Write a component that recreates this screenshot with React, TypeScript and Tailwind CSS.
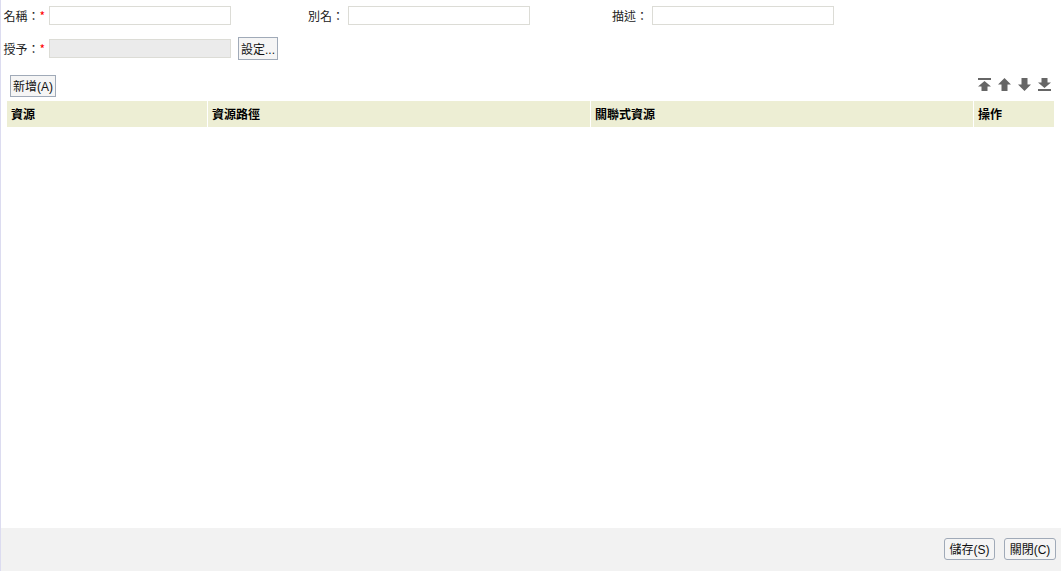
import React from "react";

const cjk = { fontFamily: '"Noto Sans CJK TC", "Liberation Sans", sans-serif' };
const mixed = { fontFamily: '"Liberation Sans", "Noto Sans CJK TC", sans-serif' };

function Field({ label, req, labelW, gapAfter, disabled }: { label: string; req?: boolean; labelW: string; gapAfter?: string; disabled?: boolean }) {
  return (
    <div className={`flex items-center ${gapAfter ?? ""}`}>
      <div className={`${labelW} flex items-center justify-end pr-[4px] text-[12px] leading-[19px] text-[#222]`}>
        <span>{label}</span>
        {req ? <span className="text-[12px] text-[#f00]">*</span> : null}
      </div>
      <div className={`w-[182px] h-[19px] border border-[#dcdcd6] ${disabled ? "bg-[#ebebeb]" : "bg-white"}`} />
    </div>
  );
}

function ArrowIcon({ kind }: { kind: "first" | "up" | "down" | "last" }) {
  const paths: Record<string, string> = {
    first: "M0 0H13V2H0ZM6.5 3L13 8.5H9.5V13H3.5V8.5H0Z",
    up: "M6.5 0L13 6.5H9.5V13H3.5V6.5H0Z",
    down: "M3.5 0H9.5V6.5H13L6.5 13L0 6.5H3.5Z",
    last: "M3.5 0H9.5V4.5H13L6.5 10L0 4.5H3.5ZM0 11H13V13H0Z",
  };
  return (
    <svg width="13" height="13" viewBox="0 0 13 13" className="block">
      <path d={paths[kind]} fill="#666666" />
    </svg>
  );
}

export default function App() {
  return (
    <div style={cjk} className="w-[1061px] h-[571px] flex flex-col bg-white border-l border-[#dcdcf0] overflow-hidden text-[12px] text-[#222]">
      <div className="flex-1 flex flex-col">
        <div className="flex items-center pt-[6px] h-[25px]">
          <Field label="名稱：" req labelW="w-[48px]" gapAfter="mr-[65px]" />
          <Field label="別名：" labelW="w-[52px]" gapAfter="mr-[70px]" />
          <Field label="描述：" labelW="w-[52px]" />
        </div>
        <div className="flex items-center mt-[12px] h-[23px]">
          <Field label="授予：" req labelW="w-[48px]" disabled />
          <button style={mixed} className="ml-[7px] w-[40px] h-[23px] pt-[2px] border border-[#a0aab8] bg-[#f5f5f5] text-[12px] text-[#111] leading-none">設定...</button>
        </div>
        <div className="flex items-center justify-between mt-[15px] h-[22px] pl-[9px] pr-[10px]">
          <button style={mixed} className="w-[46px] h-[22px] pt-[2px] border border-[#a0aab8] bg-[#f5f5f5] text-[12px] text-[#111] leading-none">新增(A)</button>
          <div className="flex items-center gap-[7px] mb-[3px]">
            <ArrowIcon kind="first" />
            <ArrowIcon kind="up" />
            <ArrowIcon kind="down" />
            <ArrowIcon kind="last" />
          </div>
        </div>
        <div className="flex ml-[6px] mt-[4px] w-[1047px] h-[26px] bg-[#edeed4] text-[12px] font-bold text-black">
          <div className="w-[201px] pl-[4px] flex items-center border-r border-white">資源</div>
          <div className="w-[383px] pl-[4px] flex items-center border-r border-white">資源路徑</div>
          <div className="w-[383px] pl-[4px] flex items-center border-r border-white">關聯式資源</div>
          <div className="flex-1 pl-[4px] flex items-center">操作</div>
        </div>
      </div>
      <div className="h-[43px] bg-[#f2f2f2] flex items-center justify-end gap-[9px] pr-[5px] pb-[2px]">
        <button style={mixed} className="w-[51px] h-[22px] pt-[2px] rounded-[3px] border border-[#a0aab8] bg-[#f5f5f5] text-[12px] text-[#111] leading-none">儲存(S)</button>
        <button style={mixed} className="w-[52px] h-[22px] pt-[2px] rounded-[3px] border border-[#a0aab8] bg-[#f5f5f5] text-[12px] text-[#111] leading-none">關閉(C)</button>
      </div>
    </div>
  );
}
